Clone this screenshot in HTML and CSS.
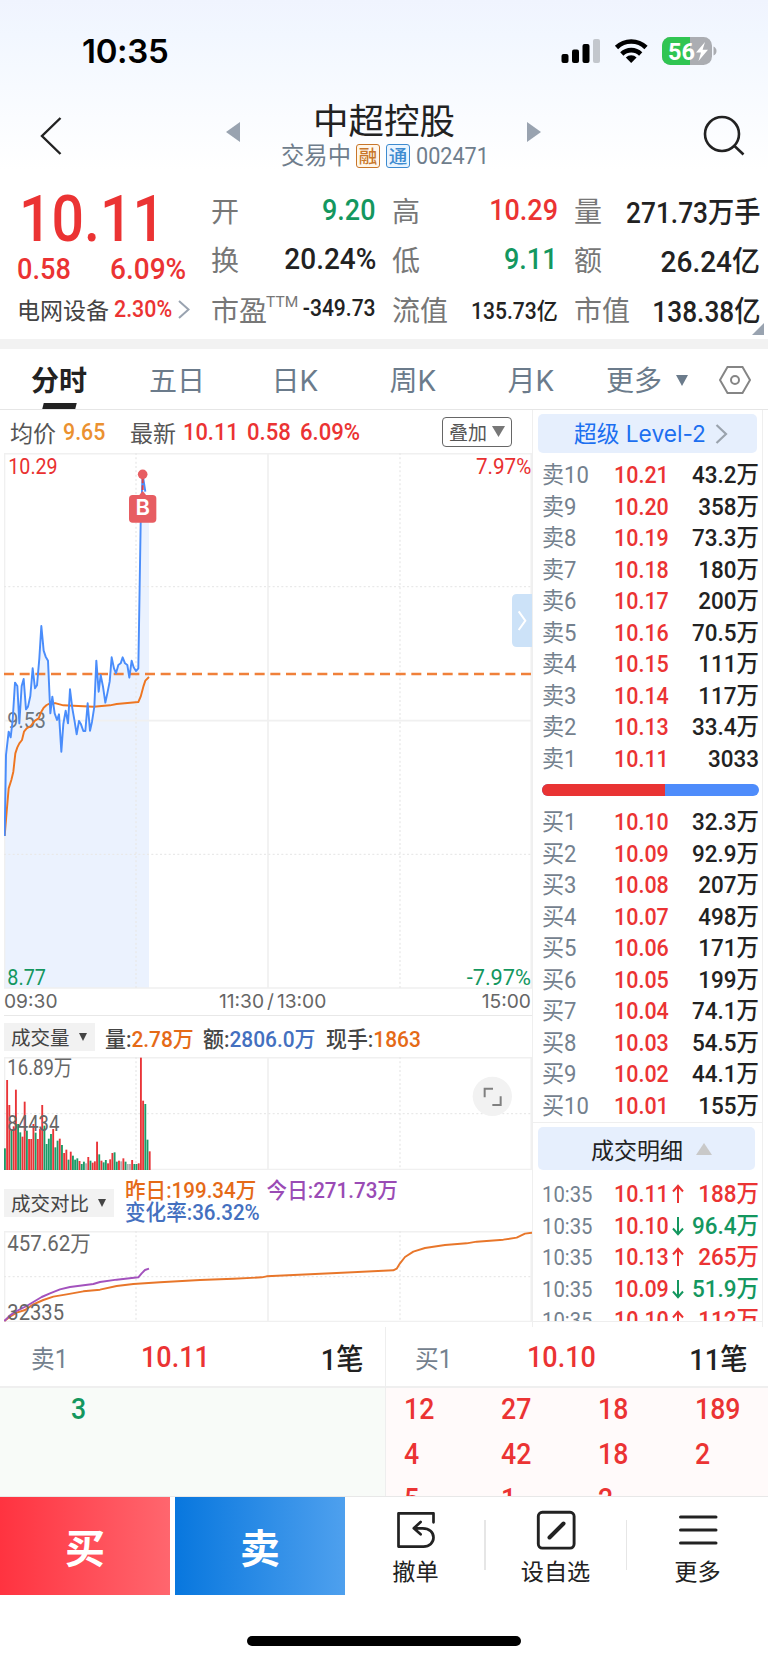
FILE: index.html
```html
<!DOCTYPE html>
<html lang="zh-CN">
<head>
<meta charset="utf-8">
<title>中超控股 002471</title>
<link rel="stylesheet" href="styles.css">
</head>
<body>
<div class="app">
  <header class="top">
    <div class="status">
      <span class="clock">10:35</span>
      <svg class="status-icons" width="156" height="30" viewBox="561 36 156 30">
        <g>
          <rect x="561.5" y="54" width="7" height="9" rx="2"/>
          <rect x="572" y="49.500" width="7" height="13.500" rx="2"/>
          <rect x="582.500" y="44" width="7" height="19" rx="2"/>
          <rect x="593" y="39" width="7" height="24" rx="2" fill="#c3c7cd"/>
        </g>
        <g fill="none" stroke="#000" stroke-width="4.600">
          <path d="M616.500 47.500a21 21 0 0 1 29.500 0"/>
          <path d="M621.800 54a13.500 13.500 0 0 1 18.900 0"/>
        </g>
        <path d="M631.200 63l-5.400-5.600a7.800 7.800 0 0 1 10.800 0z"/>
        <clipPath id="bat"><rect x="662" y="37" width="50" height="28" rx="8.500"/></clipPath>
        <g clip-path="url(#bat)"><rect x="662" y="37" width="50" height="28" fill="#abadb2"/><rect x="662" y="37" width="28" height="28" fill="#30c552"/></g>
        <path d="M713.500 46.500q3 1.500 3 4.500t-3 4.500z" fill="#abadb2"/>
        <text class="bat-text" x="668" y="59.500" textLength="27" lengthAdjust="spacingAndGlyphs">56</text>
        <path d="M705 42l-9 10.500h5l-2.500 8.500 9.500-11.200h-5.400z" fill="#fff"/>
      </svg>
    </div>
    <div class="nav">
      <svg class="back" width="24" height="40" viewBox="0 0 24 40"><path d="M21.500 2L3 20l18.500 18" fill="none" stroke="#222" stroke-width="2.400"/></svg>
      <svg class="prev" width="14" height="20"><path d="M14 0v20L0 10z" fill="#99a3b0"/></svg>
      <div class="title">
        <h1>中超控股</h1>
        <p><span>交易中</span><b class="badge rong">融</b><b class="badge tong">通</b><span class="code">002471</span></p>
      </div>
      <svg class="next" width="14" height="20"><path d="M0 0v20l14-10z" fill="#99a3b0"/></svg>
      <svg class="search" width="42" height="42" viewBox="702 114 42 42"><g fill="none" stroke="#222" stroke-width="2.600"><circle cx="721" cy="134" r="17"/><path d="M733.500 146l9 8.500"/></g></svg>
    </div>
  </header>

  <section class="quote">
    <div class="last">
      <div class="price">10.11</div>
      <div class="change"><span>0.58</span><span>6.09%</span></div>
      <div class="sector"><span class="cn">电网设备</span><span class="pct">2.30%</span><svg width="12" height="19"><path d="M1 1l9.500 8.500L1 18" fill="none" stroke="#99a3b0" stroke-width="2"/></svg></div>
    </div>
    <dl class="col c1">
      <div><dt>开</dt><dd class="green">9.20</dd></div>
      <div><dt>换</dt><dd class="wide">20.24%</dd></div>
      <div><dt>市盈<sup>TTM</sup></dt><dd class="small">-349.73</dd></div>
    </dl>
    <dl class="col c2">
      <div><dt>高</dt><dd class="red">10.29</dd></div>
      <div><dt>低</dt><dd class="green">9.11</dd></div>
      <div><dt>流值</dt><dd class="small">135.73亿</dd></div>
    </dl>
    <dl class="col c3">
      <div><dt>量</dt><dd class="tight">271.73万手</dd></div>
      <div><dt>额</dt><dd class="wide">26.24亿</dd></div>
      <div><dt>市值</dt><dd class="tight">138.38亿</dd></div>
    </dl>
    <svg class="corner" width="12" height="12"><path d="M12 0v12H0z" fill="#99a3b0"/></svg>
  </section>

  <nav class="tabs">
    <span class="on">分时</span><span>五日</span><span>日K</span><span>周K</span><span>月K</span>
    <span class="more">更多<svg width="12" height="11"><path d="M0 0h12L6 11z" fill="#6b7b8b"/></svg></span>
    <svg class="gear" width="32" height="30" viewBox="0 0 32 30"><g fill="none" stroke="#858585" stroke-width="2"><path d="M8.500 2h15L31 15l-7.500 13h-15L1 15z"/><circle cx="16" cy="15" r="4"/></g></svg>
  </nav>

  <main class="body">
    <div class="charts">
      <div class="info">
        <span class="cn">均价</span><span class="avg">9.65</span>
        <span class="cn">最新</span><span class="red i1">10.11</span><span class="red i2">0.58</span><span class="red i3">6.09%</span>
        <span class="overlay">叠加<svg width="13" height="11"><path d="M0 0h13L6.500 11z" fill="#777"/></svg></span>
      </div>
      <svg class="chart" width="528" height="536" viewBox="12 39 1584 1608">
        <path d="M14 1188L18 945 26 875 32 892 38 840 45 728 52 738 58 850 65 738 71 717 78 808 84 800 91 768 98 685 105 745 111 736 118 655 124 558 131 632 137 650 144 662 151 820 157 770 164 820 171 840 177 823 184 935 190 852 197 812 204 850 210 748 217 805 224 845 230 883 237 843 243 853 250 873 256 873 263 790 270 872 276 845 283 800 289 662 296 755 302 705 309 740 316 788 322 760 329 725 335 652 342 685 348 700 355 675 362 670 368 652 375 670 382 675 388 713 395 662 401 682 408 693 415 685 422 250 428 103 436 155 441 245 447 235V1644H13Z" fill="#ebf2fe"/>
        <g class="grid">
          <path d="M12 41H1596M13.500 39V1644M12 1644H1596M1594 39V1644M804 39V1644M12 842H1596"/>
          <path class="dot" d="M12 440H1596M12 1243H1596M408 39V1644M1200 39V1644"/>
        </g>
        <path d="M12 702H1596" stroke="#f0803a" stroke-width="7" stroke-dasharray="30 17" fill="none"/>
        <text x="22" y="865" textLength="116" lengthAdjust="spacingAndGlyphs" fill="#6c7680">9.53</text>
        <path d="M14 1188L20 1115 26 1045 34 1020 40 995 46 940 52 922 58 910 66 900 72 875 80 865 92 858 105 842 116 835 124 815 131 803 140 795 150 790 168 790 190 796 280 800 330 796 350 792 415 786 422 770 430 740 436 722 447 711" class="line" stroke="#ee7621"/>
        <path d="M14 1188L18 945 26 875 32 892 38 840 45 728 52 738 58 850 65 738 71 717 78 808 84 800 91 768 98 685 105 745 111 736 118 655 124 558 131 632 137 650 144 662 151 820 157 770 164 820 171 840 177 823 184 935 190 852 197 812 204 850 210 748 217 805 224 845 230 883 237 843 243 853 250 873 256 873 263 790 270 872 276 845 283 800 289 662 296 755 302 705 309 740 316 788 322 760 329 725 335 652 342 685 348 700 355 675 362 670 368 652 375 670 382 675 388 713 395 662 401 682 408 693 415 685 422 250 428 103 436 155" class="line" stroke="#4a8dfb"/>
        <path d="M428 110V150" stroke="#d8434b" stroke-width="6" stroke-dasharray="20 6"/>
        <circle cx="428" cy="103" r="14.500" fill="#e75d62"/>
        <path d="M416 167l12-14 12 14z" fill="#e75d62"/>
        <rect x="387" y="165" width="82" height="83" rx="11" fill="#e75d62"/>
        <text x="428" y="226" class="mark">B</text>
        <text x="25" y="103" textLength="148" lengthAdjust="spacingAndGlyphs" fill="#e93030">10.29</text>
        <text x="1428" y="103" textLength="166" lengthAdjust="spacingAndGlyphs" fill="#e93030">7.97%</text>
        <text x="22" y="1635" textLength="116" lengthAdjust="spacingAndGlyphs" fill="#14975f">8.77</text>
        <text x="1400" y="1635" textLength="193" lengthAdjust="spacingAndGlyphs" fill="#14975f">-7.97%</text>
        <path d="M1596 462h-45q-15 0-15 15v129q0 15 15 15h45z" fill="#cce2f8"/>
        <path d="M1556 514l20 28-20 28" fill="none" stroke="#fff" stroke-width="6"/>
      </svg>
      <div class="axis"><span>09:30</span><span class="mid">11:30<i>/</i>13:00</span><span>15:00</span></div>
      <div class="vol-head"><span class="chip">成交量<i></i></span><span class="k k1">量:<b class="or">2.78万</b></span><span class="k k2">额:<b class="bl">2806.0万</b></span><span class="k k3">现手:<b class="or">1863</b></span></div>
      <svg class="chart" width="528" height="113" viewBox="12 289 1584 339">
        <g class="grid">
          <path d="M12 291H1596M13.500 289V628M12 627H1596M1594 289V628M804 289V628"/>
          <path class="dot" d="M12 459H1596M408 289V628M1200 289V628"/>
        </g>
        <g id="bars"></g>
        <text x="22" y="343" textLength="195" lengthAdjust="spacingAndGlyphs" fill="#666">16.89万</text>
        <text x="22" y="511" textLength="156" lengthAdjust="spacingAndGlyphs" fill="#666">84434</text>
        <circle cx="1477" cy="407" r="59" fill="#f2f2f2"/>
        <path d="M1454 410v-26h25M1502 407v26h-25" fill="none" stroke="#808080" stroke-width="6"/>
      </svg>
      <div class="cmp-head"><span class="chip">成交对比<i></i></span>
        <p><span class="or">昨日:199.34万</span><span class="pu">今日:271.73万</span><br><span class="bl">变化率:36.32%</span></p></div>
      <svg class="chart" width="528" height="91" viewBox="12 815 1584 273">
        <g class="grid">
          <path d="M12 817H1596M13.500 815V1087M12 1087H1596M1594 815V1087M804 815V1087"/>
          <path class="dot" d="M12 952H1596M408 815V1087M1200 815V1087"/>
        </g>
        <path class="line" stroke="#e8762a" d="M13 1085L30 1072 50 1060 75 1052 100 1035 130 1022 160 1012 200 1005 250 996 300 991 350 980 400 974 480 969 600 962 700 958 785 954 800 951 1010 941 1180 933 1190 928 1200 912 1215 893 1240 877 1275 866 1335 857 1400 852 1430 847 1510 841 1550 835 1575 823 1596 820"/>
        <path class="line" stroke="#a352bd" d="M13 1085L30 1068 50 1055 80 1040 100 1028 125 1013 150 1002 180 990 210 983 280 974 300 968 350 961 415 954 425 942 435 932 447 928"/>
        <text x="22" y="874" textLength="250" lengthAdjust="spacingAndGlyphs" fill="#666">457.62万</text>
        <text x="22" y="1081" textLength="170" lengthAdjust="spacingAndGlyphs" fill="#666">32335</text>
      </svg>
    </div>

    <aside class="book">
      <div class="level"><span>超级 <em>Level-2</em></span><svg width="13" height="20"><path d="M1.500 1L11 10l-9.500 9" fill="none" stroke="#9aa3ad" stroke-width="2.200"/></svg></div>
      <div class="rows" id="sell"></div>
      <div class="ratio"><i></i></div>
      <div class="rows" id="buy"></div>
      <div class="detail-wrap"><div class="detail">成交明细<svg width="16" height="12"><path d="M8 0l8 12H0z" fill="#c9c9c9"/></svg></div></div>
      <div class="trades" id="trades"></div>
    </aside>
  </main>

  <section class="queue">
    <div class="side">
      <div class="qh"><span class="ql">卖1</span><span class="red">10.11</span><b>1笔</b></div>
      <div class="ql-list gr"><span>3</span></div>
    </div>
    <div class="side">
      <div class="qh"><span class="ql">买1</span><span class="red">10.10</span><b>11笔</b></div>
      <div class="ql-list rd"><span>12</span><span>27</span><span>18</span><span>189</span><span>4</span><span>42</span><span>18</span><span>2</span><span>5</span><span>1</span><span>2</span></div>
    </div>
  </section>

  <footer class="bar">
    <button class="buy">买</button><button class="sell">卖</button>
    <div class="act a1"><svg width="40" height="40" viewBox="0 0 40 40"><path d="M37.500 12.300V3.300H2.500V36.600H27.500C33.500 36.600 37.500 32.500 37.500 27.500S33.500 18.300 26.600 18.300H18M24.600 12L17.800 18.300l6.800 6" fill="none" stroke="#222" stroke-width="2.700" stroke-linejoin="round" stroke-linecap="round"/></svg>撤单</div>
    <i></i>
    <div class="act a2"><svg width="40" height="40" viewBox="0 0 40 40"><rect x="2.300" y="2.300" width="35.800" height="35.800" rx="4" fill="none" stroke="#222" stroke-width="2.900"/><path d="M13.500 27.500L27.500 13.500" stroke="#222" stroke-width="4" stroke-linecap="round"/></svg>设自选</div>
    <i></i>
    <div class="act a3"><svg width="40" height="40" viewBox="0 0 40 40"><path d="M2.500 7h35.500M2.500 20h35.500M2.500 33h35.500" stroke="#222" stroke-width="3" stroke-linecap="round"/></svg>更多</div>
  </footer>
  <div class="home"></div>
</div>
<script src="data.js"></script>
</body>
</html>
```

FILE: styles.css
```css
* { box-sizing: border-box; margin: 0; padding: 0; }
body { width: 768px; background: #fff; color: #222; font-family: Roboto, "Noto Sans CJK SC", sans-serif; }
.app { width: 768px; height: 1663px; overflow: hidden; display: flex; flex-direction: column; }
svg { display: block; flex: none; }
i { font-style: normal; }
.red { color: #eb3333; }
.green { color: #14975f; }
.or { color: #e56a17; }
.bl { color: #4470bf; }
.pu { color: #9a4bb5; }

.top { height: 180px; background: linear-gradient(#f0f4fe 0, #f2f7ff 35px, #fff 170px); }
.status { height: 94px; padding: 36px 0 0 82px; display: flex; }
.clock { font: 600 33px/31px Inter, sans-serif; letter-spacing: -.3px; width: 479px; color: #000; }
.bat-text { font: 700 24.500px Roboto, sans-serif; fill: #fff; }
.nav { height: 86px; display: flex; }
.back { margin: 22px 0 0 39px; }
.prev { margin: 28px 0 0 163px; }
.title { width: 287px; text-align: center; color: #222; }
.title h1 { font: 400 35.500px/48px "Noto Sans CJK SC", sans-serif; margin-top: 1px; padding-left: 1px; }
.title p { display: flex; align-items: center; height: 24px; margin-top: 1px; font-size: 23.300px; line-height: 24px; color: #6f7d8c; padding-left: 41px; white-space: nowrap; }
.title p > span:first-child { width: 70px; }
.badge { width: 24px; height: 24px; margin-left: 5px; border: 1.500px solid; border-radius: 3px; font: 500 18.500px/20px "Noto Sans CJK SC", sans-serif; }
.badge + .badge { margin-left: 6px; }
.rong { color: #c8762a; background: #fff6ea; }
.tong { color: #3d8bd0; background: #eaf5ff; }
.code { margin-left: 6px; font-size: 24px; transform: scaleX(.9); transform-origin: left; }
.next { margin: 28px 0 0; }
.search { margin: 20px 0 0 162px; }

.quote { height: 169px; border-bottom: 10px solid #f2f2f2; display: flex; position: relative; font-weight: 500; }
.last { width: 212px; padding-left: 17px; color: #eb3333; }
.price { font-size: 65px; line-height: 79px; height: 71px; transform: scaleX(.88); transform-origin: left; margin-left: 2px; }
.change { font-size: 29.500px; line-height: 36px; display: flex; justify-content: space-between; width: 169px; }
.change span { transform: scaleX(.92); transform-origin: left; }
.change span:last-child { transform: scaleX(.95); transform-origin: right; }
.sector { display: flex; align-items: center; margin-top: 5px; height: 34px; font-size: 23px; }
.sector .cn { color: #444; font-weight: 400; font-size: 23px; width: 97px; }
.sector .pct { width: 64px; transform: scaleX(.93); transform-origin: left; }
.col { padding-top: 5px; font-size: 29px; }
.col div { height: 49.500px; display: flex; justify-content: space-between; align-items: center; white-space: nowrap; }
.col dt { color: #777; font-weight: 400; font-size: 28px; display: flex; margin-left: -1px; }
.col dd { transform: scaleX(.93); transform-origin: right; }
.col .wide { transform: scaleX(.965); }
.col .tight { transform: scaleX(.905); }
.col sup { font: 400 15.500px/20px Roboto, sans-serif; margin-left: -1px; padding-top: 3px; width: 28px; }
.col .small { font-size: 23px; transform: scaleX(.915); }
.c1 .small { margin-left: -10px; }
.c1 { width: 164px; }
.c2 { width: 165px; margin-left: 17px; }
.c3 { width: 185px; margin-left: 17px; }
.corner { position: absolute; left: 752px; top: 143px; }

.tabs { height: 61px; padding-top: 3px; border-bottom: 1px solid #e6e6e6; display: flex; align-items: center; font: 400 28px/40px Inter, "Noto Sans CJK SC", sans-serif; color: #6b7b8b; position: relative; }
.tabs span { width: 118px; text-align: center; }
.tabs .on { color: #222; font-weight: 700; }
.tabs .on::after { content: ""; position: absolute; left: 43px; top: 54px; width: 33px; height: 6px; background: #222; transform: skewX(-14deg); }
.tabs .more { width: 113px; margin-left: 16px; display: flex; align-items: center; gap: 14px; }
.gear { margin-top: -2px; }

.body { display: flex; height: 917px; }
.charts { width: 532px; padding-left: 4px; display: flex; flex-direction: column; }
.info { height: 43px; display: flex; align-items: center; padding-left: 6px; font-size: 24px; font-weight: 500; }
.info > span { transform-origin: left; transform: scaleX(.92); }
.info .cn { font-weight: 400; font-size: 23px; color: #555; width: 53px; transform: none; }
.info .avg { color: #eb9130; width: 67px; transform: scaleX(.89); }
.info .i1 { width: 64px; transform: scaleX(.91); }
.info .i2 { width: 53px; }
.info .i3 { width: 100px; }
.info .overlay { transform: none; margin-left: auto; margin-right: 20px; width: 70px; height: 30px; border: 1.500px solid #666; border-radius: 4px; color: #555; font-size: 19px; font-weight: 400; display: flex; align-items: center; justify-content: center; gap: 5px; }
.chart { font-size: 65px; font-weight: 400; }
.grid path { fill: none; stroke: #f0f0f0; stroke-width: 5; }
.grid .dot { stroke: #e9e9e9; stroke-width: 4; stroke-dasharray: 6 7; }
.line { fill: none; stroke-width: 5.800; stroke-linejoin: round; }
.mark { font: 600 66px Inter, sans-serif; fill: #fff; text-anchor: middle; }
.axis { height: 27px; display: flex; justify-content: space-between; border-bottom: 1px solid #e8e8e8; font: 400 19.200px/24px Inter, sans-serif; color: #666; padding-right: 1px; }
.axis .mid { margin-left: 6px; }
.axis i { padding: 0 3px; }
.vol-head, .cmp-head { display: flex; align-items: center; font-size: 22px; color: #444; white-space: nowrap; }
.vol-head { height: 41px; font-weight: 500; }
.vol-head b { font-weight: 500; }
.chip { background: #f2f2f2; height: 28px; padding: 0 8px 0 7px; font: 400 19.500px/28px "Noto Sans CJK SC", sans-serif; color: #444; display: flex; align-items: center; gap: 9px; }
.chip i { border: 4px solid transparent; border-top: 8px solid #444; border-bottom: 0; }
.k { transform: scaleX(.95); transform-origin: left; }
.k1 { margin-left: 10px; width: 98px; }
.k2 { width: 123px; }
.cmp-head { height: 61px; padding-top: 4px; }
.cmp-head p { margin-left: 11px; line-height: 22px; padding-bottom: 2px; font-weight: 500; transform: scaleX(.935); transform-origin: left; }
.pu { margin-left: 11px; }

.book { width: 231px; border-left: 1px solid #efefef; border-right: 1px solid #efefef; padding: 4px 2px 0 9px; font-size: 24px; font-weight: 500; }
.level { width: 219px; height: 39px; margin-left: -4px; background: #e6effd; border-radius: 5px; color: #1c6ff0; display: flex; align-items: center; padding-left: 36px; gap: 9px; font: 400 22.700px/39px Inter, "Noto Sans CJK SC", sans-serif; white-space: nowrap; }
.level em { font-style: normal; }
.rows { padding-top: 7px; }
.row { height: 31.500px; line-height: 31.500px; display: grid; grid-template-columns: 72px 60px 85px; white-space: nowrap; }
.row .name { color: #74818e; font-weight: 400; transform: scaleX(.92); transform-origin: left; }
.row .val { color: #eb3333; display: flex; }
.row .val span { width: 58px; transform: scaleX(.895); transform-origin: left; }
.row .size { text-align: right; transform: scaleX(.935); transform-origin: right; }
.ratio { height: 12px; width: 217px; margin-top: 9px; border-radius: 6px; background: #4e8cfb; overflow: hidden; }
.ratio i { display: block; height: 12px; width: 123px; background: #e93333; }
#buy { padding-top: 11px; }
.detail-wrap { border-top: 1px solid #efefef; margin: 0 -2px 0 -9px; padding: 4px 0 0 5px; }
.detail { width: 217px; height: 43px; background: #e6effd; border-radius: 5px; display: flex; align-items: center; justify-content: center; gap: 13px; font-size: 23px; font-weight: 400; padding-left: 10px; }
.trades { margin: 0 -2px 0 -9px; padding: 9px 2px 0 9px; height: 152px; border-bottom: 1px solid #eee; overflow: hidden; }
.trades .name { font-size: 22px; }
.trades svg { margin: 5px 0 0 0; }
.trades .up { color: #eb3333; }
.trades .down { color: #14975f; }
.trades .size { color: inherit; transform: scaleX(.935); }

.queue { display: flex; height: 170px; border-bottom: 1px solid #e8e8e8; font-weight: 500; font-size: 29px; flex: none; }
.side { width: 383px; height: 169px; overflow: hidden; }
.side:first-child { width: 386px; border-right: 1px solid #eee; }
.qh { height: 61px; border-bottom: 2px solid #efefef; display: grid; grid-template-columns: 110px 100px 1fr; align-items: center; padding: 0 21px 0 31px; }
.side:last-child .qh { padding-left: 29px; grid-template-columns: 112px 100px 1fr; }
.qh span { transform: scaleX(.93); transform-origin: left; }
.qh b { text-align: right; font-weight: 500; transform: scaleX(.94); transform-origin: right; }
.qh .ql { color: #74818e; font-weight: 400; font-size: 25.500px; }
.ql-list { height: 108px; display: grid; grid-template-columns: repeat(4, 97px); grid-auto-rows: 45px; line-height: 43px; }
.ql-list span { transform: scaleX(.92); transform-origin: left; }
.gr { background: #f8fbf8; color: #14975f; padding-left: 71px; }
.rd { background: #fffafa; color: #eb3333; padding-left: 18px; }

.bar { height: 98px; display: flex; align-items: center; flex: none; }
.bar button { width: 170px; height: 98px; border: 0; color: #fff; font: 700 40px/96px "Noto Sans CJK SC", sans-serif; margin-right: 5px; flex: none; }
.buy { background: linear-gradient(90deg, #ff3340, #ff666e); }
.sell { background: linear-gradient(90deg, #0877de, #4ea0ee); }
.act { display: flex; flex-direction: column; align-items: center; font: 400 23.200px/34px "Noto Sans CJK SC", sans-serif; height: 98px; padding-top: 13px; gap: 3px; }
.bar > i { width: 1.500px; height: 50px; background: #e6e6e6; margin-top: -2px; }
.a1 { width: 134px; padding-right: 3px; }
.a2 { width: 140px; }
.a3 { width: 141px; }
.home { width: 274px; height: 10px; border-radius: 5px; background: #000; margin: 41px 0 0 247px; flex: none; }
```

FILE: data.js
```js
const sell = ['10.21 43.2万', '10.20 358万', '10.19 73.3万', '10.18 180万', '10.17 200万', '10.16 70.5万', '10.15 111万', '10.14 117万', '10.13 33.4万', '10.11 3033'];
const buy = ['10.10 32.3万', '10.09 92.9万', '10.08 207万', '10.07 498万', '10.06 171万', '10.05 199万', '10.04 74.1万', '10.03 54.5万', '10.02 44.1万', '10.01 155万'];
const row = (label, line) => {
  const [price, size] = line.split(' ');
  return `<div class="row"><span class="name">${label}</span><span class="val"><span>${price}</span></span><span class="size">${size}</span></div>`;
};
document.getElementById('sell').innerHTML = sell.map((l, i) => row('卖' + (10 - i), l)).join('');
document.getElementById('buy').innerHTML = buy.map((l, i) => row('买' + (i + 1), l)).join('');

const trades = [['10.11', 'up', '188万'], ['10.10', 'down', '96.4万'], ['10.13', 'up', '265万'], ['10.09', 'down', '51.9万'], ['10.10', 'up', '112万']];
const arrow = { up: 'M6 19V2M1 7.500L6 1.800l5 5.700', down: 'M6 1v17M1 12.500L6 18.200l5-5.700' };
document.getElementById('trades').innerHTML = trades.map(([p, d, v]) =>
  `<div class="row ${d}"><span class="name">10:35</span><span class="val"><span>${p}</span><svg class="${d}" width="12" height="20"><path d="${arrow[d]}" fill="none" stroke="currentColor" stroke-width="2"/></svg></span><span class="size">${v}</span></div>`).join('');

// volume per minute: colour key + bar top
const bars = 'g563 r358 r433 g510 r497 r387 g490 g515 r528 r423 g510 r535 r535 r490 g516 r535 r505 r433 g495 g550 g534 g520 r505 g560 g540 r534 g553 r577 r567 g597 r573 g585 g597 g593 r601 g610 g603 n608 r589 g600 r606 r602 r543 g581 r600 g605 g598 r608 r596 r577 g575 g603 r600 n602 r593 g603 n610 n610 r598 g610 g610 r608 r291 r420 g430 g537 r572'.split(' ');
const colors = { r: '#e93438', g: '#1c9b68', n: '#b0b0b0' };
document.getElementById('bars').innerHTML = bars.map((b, i) =>
  `<rect x="${12 + i * 6.58}" y="${b.slice(1)}" width="5.600" height="${628 - b.slice(1)}" fill="${colors[b[0]]}"/>`).join('');
```
